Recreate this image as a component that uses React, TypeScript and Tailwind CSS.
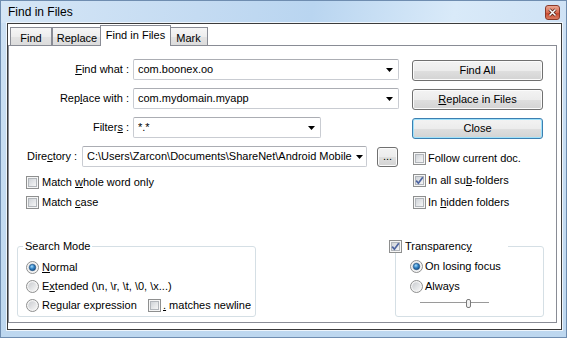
import React from "react";

function DropArrow() {
    return (
        <svg width="7" height="4" viewBox="0 0 7 4" className="shrink-0">
            <path d="M0 0H7L3.5 4Z" fill="#000" />
        </svg>
    );
}

function Combo({ className, text }: { className: string; text: string }) {
    return (
        <div className={`${className} h-[21px] flex items-center bg-white border border-[#c9ccd2] border-t-[#abadb3] rounded-[2px] pl-[4px]`}>
            <span className="flex-1 overflow-hidden whitespace-nowrap">{text}</span>
            <DropArrow />
        </div>
    );
}

function Check({ checked = false }: { checked?: boolean }) {
    return (
        <svg width="13" height="13" viewBox="0 0 13 13" className="shrink-0">
            <defs>
                <linearGradient id="cbg" x1="0" y1="0" x2="1" y2="1">
                    <stop offset="0" stopColor="#cdd1d6" />
                    <stop offset="1" stopColor="#f8f8f8" />
                </linearGradient>
            </defs>
            <rect x="0.5" y="0.5" width="12" height="12" fill="#f6f6f6" stroke="#8e8f8f" />
            <rect x="2.5" y="2.5" width="8" height="8" fill="url(#cbg)" stroke="#b2b6bb" />
            {checked && <path d="M3.2 6.6L5.4 9.2L9.8 3.2" fill="none" stroke="#4d64a0" strokeWidth="1.7" />}
        </svg>
    );
}

function Radio({ on = false }: { on?: boolean }) {
    return (
        <svg width="13" height="13" viewBox="0 0 13 13" className="shrink-0">
            <defs>
                <linearGradient id="rbg" x1="0" y1="0" x2="1" y2="1">
                    <stop offset="0" stopColor="#c9ccd0" />
                    <stop offset="1" stopColor="#f6f6f6" />
                </linearGradient>
                <radialGradient id="rsel" cx="0.4" cy="0.35" r="0.7">
                    <stop offset="0" stopColor="#a6dcfb" />
                    <stop offset="0.5" stopColor="#3183c6" />
                    <stop offset="1" stopColor="#15497e" />
                </radialGradient>
            </defs>
            <circle cx="6.5" cy="6.5" r="6" fill="#f4f4f4" stroke="#8e8f8f" />
            <circle cx="6.5" cy="6.5" r="4.3" fill="url(#rbg)" />
            {on && <circle cx="6.5" cy="6.5" r="3.2" fill="url(#rsel)" stroke="#1b4c7e" strokeWidth="0.6" />}
        </svg>
    );
}

function Btn({ children, def = false }: { children: React.ReactNode; def?: boolean }) {
    return (
        <div
            className={`w-[131px] h-[21px] rounded-[3px] border flex items-center justify-center bg-[linear-gradient(#f3f3f3_0%,#ececec_50%,#dfdfdf_51%,#d3d3d3_100%)] ${
                def ? "border-[#3c7fb1] shadow-[inset_0_0_0_1px_#9fe2fb]" : "border-[#707070] shadow-[inset_0_0_0_1px_#fbfbfb]"
            }`}
        >
            {children}
        </div>
    );
}

function Tab({ label, w }: { label: string; w: string }) {
    return (
        <div className={`${w} h-[18px] border border-b-0 border-[#898c95] bg-[linear-gradient(#f6f6f6,#ededed_50%,#e3e3e3_51%,#dcdcdc)] flex items-center justify-center pt-[3px]`}>
            {label}
        </div>
    );
}

export default function App() {
    return (
        <div className="w-[567px] h-[338px] border border-[#6f8db0] bg-[linear-gradient(180deg,#cde1f4,#bdd7ef)] flex flex-col overflow-hidden font-['Liberation_Sans',Arial,sans-serif] text-[11px] leading-none text-black">
            {/* title bar */}
            <div className="h-[22px] flex items-center justify-between pl-[7px] pr-[6px] bg-[linear-gradient(100deg,#d5e6f6_0%,#c4dbf2_35%,#b9d5f0_55%,#d9eaf9_80%,#cfe2f5_100%)]">
                <span className="text-[12px]">Find in Files</span>
                <div className="w-[15px] h-[15px] rounded-[3px] border border-[#8a3a2a] bg-[linear-gradient(#eba792,#d76a50_50%,#c6452d_51%,#d97a5f)] flex items-center justify-center">
                    <svg width="9" height="9" viewBox="0 0 9 9">
                        <path d="M1.5 1.5L7.5 7.5M7.5 1.5L1.5 7.5" stroke="#4a1c12" strokeWidth="3" />
                        <path d="M1.5 1.5L7.5 7.5M7.5 1.5L1.5 7.5" stroke="#fff" strokeWidth="1.5" />
                    </svg>
                </div>
            </div>

            {/* client */}
            <div className="ml-[6px] w-[555px] h-[307px] border border-[#3b3b3b] bg-white shadow-[0_0_0_1px_#eef5fc] flex flex-col">
                <div className="h-[21px] flex items-end pl-[2px]">
                    <Tab label="Find" w="w-[42px]" />
                    <Tab label="Replace" w="w-[50px]" />
                    <div className="relative z-10 w-[71px] h-[21px] -mx-[2px] -mb-[1px] border border-b-0 border-[#898c95] bg-white flex items-center justify-center pb-[1px]">
                        Find in Files
                    </div>
                    <Tab label="Mark" w="w-[39px]" />
                </div>

                <div className="w-[549px] h-[278px] border border-[#898c95] flex flex-col pt-[13px]">
                    {/* find / replace / filters */}
                    <div className="flex">
                        <div className="flex flex-col gap-[8px]">
                            <div className="h-[21px] flex items-center">
                                <span className="w-[120px] text-right"><u>F</u>ind what :</span>
                                <Combo className="ml-[4px] w-[266px] pr-[5px]" text="com.boonex.oo" />
                            </div>
                            <div className="h-[21px] flex items-center">
                                <span className="w-[120px] text-right">Rep<u>l</u>ace with :</span>
                                <Combo className="ml-[4px] w-[266px] pr-[5px]" text="com.mydomain.myapp" />
                            </div>
                            <div className="h-[21px] flex items-center">
                                <span className="w-[120px] text-right">Filter<u>s</u> :</span>
                                <Combo className="ml-[4px] w-[188px] pr-[5px]" text="*.*" />
                            </div>
                        </div>
                        <div className="ml-[13px] mt-[1px] flex flex-col gap-[8px]">
                            <Btn>Find All</Btn>
                            <Btn><span><u>R</u>eplace in Files</span></Btn>
                            <Btn def>Close</Btn>
                        </div>
                    </div>

                    {/* directory + options */}
                    <div className="flex mt-[7px]">
                        <div className="w-[404px] flex flex-col">
                            <div className="h-[21px] flex items-center pl-[18px]">
                                <span className="w-[51px]">Dire<u>c</u>tory :</span>
                                <Combo className="ml-[4px] w-[285px] pr-[3px]" text={"C:\\Users\\Zarcon\\Documents\\ShareNet\\Android Mobile"} />
                                <div className="ml-[10px] w-[21px] h-[20px] rounded-[3px] border border-[#707070] shadow-[inset_0_0_0_1px_#fbfbfb] bg-[linear-gradient(#f3f3f3_0%,#ececec_50%,#dfdfdf_51%,#d3d3d3_100%)] flex items-center justify-center">
                                    ...
                                </div>
                            </div>
                            <div className="mt-[5px] h-[20px] flex items-center gap-[3px] pl-[17px]">
                                <Check />
                                <span>Match <u>w</u>hole word only</span>
                            </div>
                            <div className="h-[20px] flex items-center gap-[3px] pl-[17px]">
                                <Check />
                                <span>Match <u>c</u>ase</span>
                            </div>
                        </div>
                        <div className="flex flex-col pt-[1px]">
                            <div className="h-[22px] flex items-center gap-[2px]">
                                <Check />
                                <span>Follow current doc.</span>
                            </div>
                            <div className="h-[22px] flex items-center gap-[2px]">
                                <Check checked />
                                <span>In all su<u>b</u>-folders</span>
                            </div>
                            <div className="h-[22px] flex items-center gap-[2px]">
                                <Check />
                                <span>In <u>h</u>idden folders</span>
                            </div>
                        </div>
                    </div>

                    {/* groups */}
                    <div className="flex items-start mt-[27px] pl-[8px]">
                        <fieldset className="w-[239px] h-[77px] border border-[#d5dfe5] rounded-[3px] pl-[8px] pt-[5px]">
                            <legend className="-ml-[3px] px-[2px] leading-[13px]">Search Mode</legend>
                            <div className="h-[19px] flex items-center gap-[3px]">
                                <Radio on />
                                <span><u>N</u>ormal</span>
                            </div>
                            <div className="h-[19px] flex items-center gap-[3px]">
                                <Radio />
                                <span>E<u>x</u>tended {"(\\n, \\r, \\t, \\0, \\x...)"}</span>
                            </div>
                            <div className="h-[19px] flex items-center">
                                <div className="w-[122px] flex items-center gap-[3px]">
                                    <Radio />
                                    <span>Re<u>g</u>ular expression</span>
                                </div>
                                <Check />
                                <span className="ml-[2px]"><u>.</u> matches newline</span>
                            </div>
                        </fieldset>

                        <fieldset className="ml-[139px] w-[149px] h-[77px] border border-[#d5dfe5] rounded-[3px] pl-[14px] pt-[3px]">
                            <legend className="-ml-[21px] leading-[13px] flex items-center gap-[3px]">
                                <Check checked />
                                <span className="w-[103px]">Transparenc<u>y</u></span>
                            </legend>
                            <div className="h-[20px] flex items-center gap-[2px]">
                                <Radio on />
                                <span>On losing focus</span>
                            </div>
                            <div className="h-[20px] flex items-center gap-[2px]">
                                <Radio />
                                <span>Always</span>
                            </div>
                            <svg width="70" height="12" viewBox="0 0 70 12" className="ml-[10px] block">
                                <line x1="0" y1="6.5" x2="69" y2="6.5" stroke="#9a9a9a" />
                                <line x1="0" y1="7.5" x2="69" y2="7.5" stroke="#ffffff" />
                                <rect x="46.5" y="3.5" width="4" height="8" rx="1.5" fill="#f2f2f2" stroke="#7a7a7a" />
                            </svg>
                        </fieldset>
                    </div>
                </div>
            </div>
        </div>
    );
}
